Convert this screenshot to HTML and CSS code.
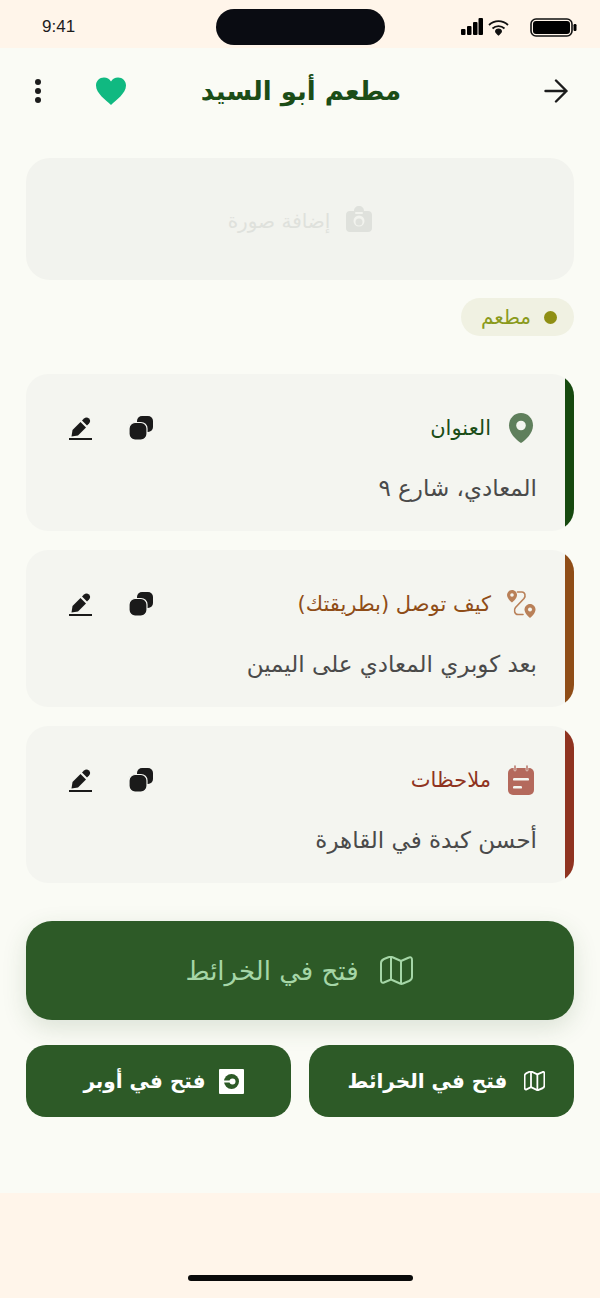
FILE: index.html
```html
<!DOCTYPE html>
<html lang="ar" dir="rtl">
<head>
    <meta charset="UTF-8">
    <meta name="viewport" content="width=device-width, initial-scale=1.0">
    <title>مطعم أبو السيد</title>
    <link rel="stylesheet" href="styles.css">
</head>
<body>
    <div class="status-bar" dir="ltr">
        <span class="time">9:41</span>
        <div class="island"></div>
        <div class="status-icons">
            <svg width="22" height="19" viewBox="0 0 22 19"><rect x="0" y="11" width="4.500" height="6" rx="1"/><rect x="6" y="8" width="4.500" height="9" rx="1"/><rect x="12" y="4" width="4.500" height="13" rx="1"/><rect x="17.500" y="0" width="4.500" height="17" rx="1"/></svg>
            <svg width="21" height="17" viewBox="0 0 21 17" fill="none" stroke="#111" stroke-width="1.800"><path d="M1 6C6.500 .8 14.500 .8 20 6"/><path d="M4.500 9.500C8 6.200 13 6.200 16.500 9.500"/><path d="M10.500 9.500C12.500 9.500 14 10.800 14 12.300 14 13.800 12 15.500 10.500 16.800 9 15.500 7 13.800 7 12.300 7 10.800 8.500 9.500 10.500 9.500Z" fill="#111" stroke="none"/></svg>
            <svg class="battery" width="47" height="19" viewBox="0 0 47 19"><rect x="1" y="1" width="41" height="17" rx="5" fill="none" stroke="#111" stroke-width="1.600"/><rect x="3" y="3" width="37" height="13" rx="3"/><rect x="43.500" y="6" width="3" height="7" rx="1.200"/></svg>
        </div>
    </div>

    <div class="screen">
        <div class="header">
            <a class="back" href="#">
                <svg width="24" height="24" viewBox="0 0 24 24" fill="none" stroke="#1c1c1c" stroke-width="2.400" stroke-linecap="round" stroke-linejoin="round"><path d="M1.500 12H22.500M12 1.500L22.500 12 12 22.500"/></svg>
            </a>
            <h1>مطعم أبو السيد</h1>
            <div class="header-actions">
                <svg width="32" height="28" viewBox="0 0 32 28"><path d="M16 28C11 23 1 16.500 1 8.500 1 4 4.500 .5 9 .5 12 .5 14.500 2 16 4.500 17.500 2 20 .5 23 .5 27.500 .5 31 4 31 8.500 31 16.500 21 23 16 28Z" fill="#10b981"/></svg>
                <svg width="8" height="26" viewBox="0 0 8 26" fill="#1c1c1c"><circle cx="4" cy="4" r="3"/><circle cx="4" cy="13" r="3"/><circle cx="4" cy="22" r="3"/></svg>
            </div>
        </div>

        <div class="add-photo">
            <svg width="26" height="26" viewBox="0 0 26 26"><path d="M4 5H8C8 2 10 0 13 0S18 2 18 5H22C24.500 5 26 6.500 26 9V22C26 24.500 24.500 26 22 26H4C1.500 26 0 24.500 0 22V9C0 6.500 1.500 5 4 5Z" fill="#dfe1dc"/><circle cx="13" cy="15" r="5.500" fill="#f2f3ee"/><circle cx="13" cy="16" r="3.500" fill="#dfe1dc"/><rect x="9" y="6" width="8" height="2" rx="1" fill="#f2f3ee"/></svg>
            <span>إضافة صورة</span>
        </div>

        <div class="chip-row">
            <div class="chip"><i class="chip-dot"></i><span>مطعم</span></div>
        </div>

        <div class="card">
            <div class="stripe stripe-green"></div>
            <div class="card-body">
                <div class="card-top">
                    <svg class="card-icon" width="30" height="30" viewBox="0 0 26 30"><path d="M13 0C6 0 1 5.500 1 12.500 1 20 8 27 13 30 18 27 25 20 25 12.500 25 5.500 20 0 13 0Z" fill="#5f7f5c"/><circle cx="13" cy="12.500" r="4.800" fill="#f4f5f0"/></svg>
                    <span class="card-label label-green">العنوان</span>
                    <div class="card-tools">
                        <svg width="24" height="24" viewBox="0 0 24 24"><rect x="8" y="0" width="16" height="16" rx="5" fill="#1a1a1a"/><rect x="0" y="6.500" width="18" height="17.500" rx="6" fill="#1a1a1a" stroke="#f4f5f0" stroke-width="1.200"/></svg>
                        <svg width="23" height="24" viewBox="0 0 23 24" fill="#1a1a1a"><path d="M2.500 20.500L3.500 14 11.500 6 17 11.500 9 19.500Z"/><path d="M13 4.500L15 2.500C16.500 1 18.500 1 20 2.500 21.500 4 21.500 6 20 7.500L18 9.500Z"/><rect x="0" y="22" width="23" height="2"/></svg>
                    </div>
                </div>
                <p class="card-text">المعادي، شارع ٩</p>
            </div>
        </div>

        <div class="card">
            <div class="stripe stripe-brown"></div>
            <div class="card-body">
                <div class="card-top">
                    <svg class="card-icon" width="30" height="30" viewBox="0 0 30 30" fill="none" stroke="#b98058" stroke-width="1.600" stroke-linecap="round"><path d="M6 1C3 1 1 3.500 1 6 1 9 4 12 6 13.500 8 12 11 9 11 6 11 3.500 9 1 6 1Z" fill="#b98058" stroke="none"/><circle cx="6" cy="6" r="1.800" fill="#f4f5f0" stroke="none"/><path d="M11.500 3H16C19 3 20 7 18 9.500L9.500 18.500C7.500 21 8.500 25.500 12 25.500H17"/><path d="M24 15C21 15 18.500 17.500 18.500 20.500 18.500 24 22 27.500 24 29 26 27.500 29.500 24 29.500 20.500 29.500 17.500 27 15 24 15Z" fill="#b98058" stroke="none"/><circle cx="24" cy="20.500" r="2" fill="#f4f5f0" stroke="none"/></svg>
                    <span class="card-label label-brown">كيف توصل (بطريقتك)</span>
                    <div class="card-tools">
                        <svg width="24" height="24" viewBox="0 0 24 24"><rect x="8" y="0" width="16" height="16" rx="5" fill="#1a1a1a"/><rect x="0" y="6.500" width="18" height="17.500" rx="6" fill="#1a1a1a" stroke="#f4f5f0" stroke-width="1.200"/></svg>
                        <svg width="23" height="24" viewBox="0 0 23 24" fill="#1a1a1a"><path d="M2.500 20.500L3.500 14 11.500 6 17 11.500 9 19.500Z"/><path d="M13 4.500L15 2.500C16.500 1 18.500 1 20 2.500 21.500 4 21.500 6 20 7.500L18 9.500Z"/><rect x="0" y="22" width="23" height="2"/></svg>
                    </div>
                </div>
                <p class="card-text">بعد كوبري المعادي على اليمين</p>
            </div>
        </div>

        <div class="card">
            <div class="stripe stripe-red"></div>
            <div class="card-body">
                <div class="card-top">
                    <svg class="card-icon" width="30" height="30" viewBox="0 0 26 30"><rect x="0" y="3" width="26" height="27" rx="5" fill="#b4695c"/><rect x="6" y="0" width="2" height="6" rx="1" fill="#b4695c" stroke="#f4f5f0" stroke-width=".6"/><rect x="18" y="0" width="2" height="6" rx="1" fill="#b4695c" stroke="#f4f5f0" stroke-width=".6"/><rect x="5" y="13" width="16" height="2.600" rx="1.200" fill="#f4f5f0"/><rect x="5" y="21" width="9" height="2.600" rx="1.200" fill="#f4f5f0"/></svg>
                    <span class="card-label label-red">ملاحظات</span>
                    <div class="card-tools">
                        <svg width="24" height="24" viewBox="0 0 24 24"><rect x="8" y="0" width="16" height="16" rx="5" fill="#1a1a1a"/><rect x="0" y="6.500" width="18" height="17.500" rx="6" fill="#1a1a1a" stroke="#f4f5f0" stroke-width="1.200"/></svg>
                        <svg width="23" height="24" viewBox="0 0 23 24" fill="#1a1a1a"><path d="M2.500 20.500L3.500 14 11.500 6 17 11.500 9 19.500Z"/><path d="M13 4.500L15 2.500C16.500 1 18.500 1 20 2.500 21.500 4 21.500 6 20 7.500L18 9.500Z"/><rect x="0" y="22" width="23" height="2"/></svg>
                    </div>
                </div>
                <p class="card-text">أحسن كبدة في القاهرة</p>
            </div>
        </div>

        <button class="btn-main">
            <svg width="33" height="29" viewBox="0 0 33 29" fill="none" stroke="#a5d6a7" stroke-width="2" stroke-linejoin="round"><path d="M1 7C1 5 2 4 4 3L9 1C10 .5 11 .5 12 1L21 5 29 1.500C31 .5 32 2 32 4V21C32 23 31 24 29 25L23 27.500C22 28 21 28 20 27.500L11 23.500 4 26.500C2 27.500 1 26 1 24Z"/><path d="M11 1V23.500M21 5V27.500"/></svg>
            <span>فتح في الخرائط</span>
        </button>

        <div class="btn-row">
            <button class="btn-small btn-map">
                <svg width="21" height="20" viewBox="0 0 33 29" preserveAspectRatio="none" fill="none" stroke="#fff" stroke-width="2.800" stroke-linejoin="round"><path d="M1 7C1 5 2 4 4 3L9 1C10 .5 11 .5 12 1L21 5 29 1.500C31 .5 32 2 32 4V21C32 23 31 24 29 25L23 27.500C22 28 21 28 20 27.500L11 23.500 4 26.500C2 27.500 1 26 1 24Z"/><path d="M11 1V23.500M21 5V27.500"/></svg>
                <span>فتح في الخرائط</span>
            </button>
            <button class="btn-small btn-uber">
                <svg width="25" height="25" viewBox="0 0 25 25"><rect width="25" height="25" rx="1" fill="#fff"/><circle cx="12.500" cy="12.500" r="7.500" fill="#2d5a27"/><circle cx="13.500" cy="12.500" r="3" fill="#fff"/><rect x="4" y="11.500" width="9" height="2" fill="#fff"/></svg>
                <span>فتح في أوبر</span>
            </button>
        </div>
    </div>

    <div class="home-area">
        <div class="home-bar"></div>
    </div>
</body>
</html>
```

FILE: styles.css
```css
* {
    margin: 0;
    padding: 0;
    box-sizing: border-box;
}

body {
    width: 600px;
    height: 1298px;
    background-color: #fff5ea;
    font-family: "DejaVu Sans", sans-serif;
    display: flex;
    flex-direction: column;
}

.status-bar {
    height: 48px;
    padding: 9px 23px 0 42px;
    display: flex;
}

.time {
    font-family: "Liberation Sans", sans-serif;
    font-size: 17px;
    line-height: 36px;
    color: #1c1c1c;
    width: 174px;
}

.island {
    width: 169px;
    height: 36px;
    background-color: #0a0c12;
    border-radius: 18px;
}

.status-icons {
    margin-left: auto;
    display: flex;
    align-items: center;
    gap: 5px;
    height: 36px;
}

.battery {
    margin-left: 16px;
}

.screen {
    height: 1145px;
    background-color: #fafbf5;
    padding: 0 26px;
}

.header {
    height: 86px;
    display: grid;
    grid-template-columns: 1fr auto 1fr;
    align-items: center;
    padding: 0 6px 0 8px;
}

.back {
    display: flex;
}

.header h1 {
    font-size: 26px;
    font-weight: bold;
    color: #1b4d17;
}

.header-actions {
    justify-self: end;
    display: flex;
    align-items: center;
    gap: 53px;
}

.add-photo {
    margin-top: 24px;
    height: 122px;
    border-radius: 24px;
    background-color: #f2f3ee;
    display: flex;
    align-items: center;
    justify-content: center;
    gap: 16px;
    color: #dfe1dc;
    font-size: 20px;
}

.add-photo span {
    padding-top: 3px;
}

.chip-row {
    margin-top: 18px;
    display: flex;
}

.chip {
    height: 38px;
    width: 113px;
    border-radius: 19px;
    background-color: #f0f1e2;
    padding: 0 17px;
    display: flex;
    align-items: center;
    gap: 13px;
    color: #8a9a1c;
    font-size: 20px;
}

.chip-dot {
    width: 13px;
    height: 13px;
    border-radius: 50%;
    background-color: #8f8f14;
}

.card {
    margin-top: 19px;
    height: 157px;
    border-radius: 22px;
    background-color: #f4f5f0;
    overflow: hidden;
    display: flex;
}

.chip-row + .card {
    margin-top: 38px;
}

.card-body {
    flex: 1;
    padding: 39px 28px 0 43px;
}

.stripe {
    width: 9px;
}

.stripe-green {
    background-color: #16490f;
}

.stripe-brown {
    background-color: #8f4d17;
}

.stripe-red {
    background-color: #8f3320;
}

.card-top {
    display: flex;
    align-items: center;
    height: 30px;
    gap: 15px;
}

.card-icon {
    margin-right: 1px;
}

.card-label {
    font-size: 21px;
}

.label-green {
    color: #1b4d17;
}

.label-brown {
    color: #8f4d17;
}

.label-red {
    color: #8f3320;
}

.card-tools {
    margin-right: auto;
    display: flex;
    align-items: center;
    gap: 37px;
}

.card-text {
    margin-top: 30px;
    font-size: 23px;
    line-height: 30px;
    color: #4a4a4a;
}

button {
    font-family: inherit;
    border: none;
    background-color: #2d5a27;
    display: flex;
    align-items: center;
    justify-content: center;
    cursor: pointer;
}

.btn-main {
    width: 100%;
    height: 99px;
    margin-top: 38px;
    padding-right: 2px;
    border-radius: 26px;
    gap: 21px;
    font-size: 26px;
    color: #a5d6a7;
    box-shadow: 0 8px 24px rgba(45, 90, 39, 0.15);
}

.btn-row {
    margin-top: 25px;
    display: flex;
    gap: 18px;
}

.btn-small {
    width: 265px;
    height: 72px;
    border-radius: 20px;
    padding-left: 10px;
    font-size: 20px;
    font-weight: bold;
    color: white;
}

.btn-map {
    gap: 17px;
}

.btn-uber {
    gap: 13px;
}

.home-area {
    flex: 1;
    display: flex;
    justify-content: center;
    align-items: flex-end;
    padding-bottom: 17px;
}

.home-bar {
    width: 225px;
    height: 6px;
    border-radius: 3px;
    background-color: #0a0a0a;
}
```
